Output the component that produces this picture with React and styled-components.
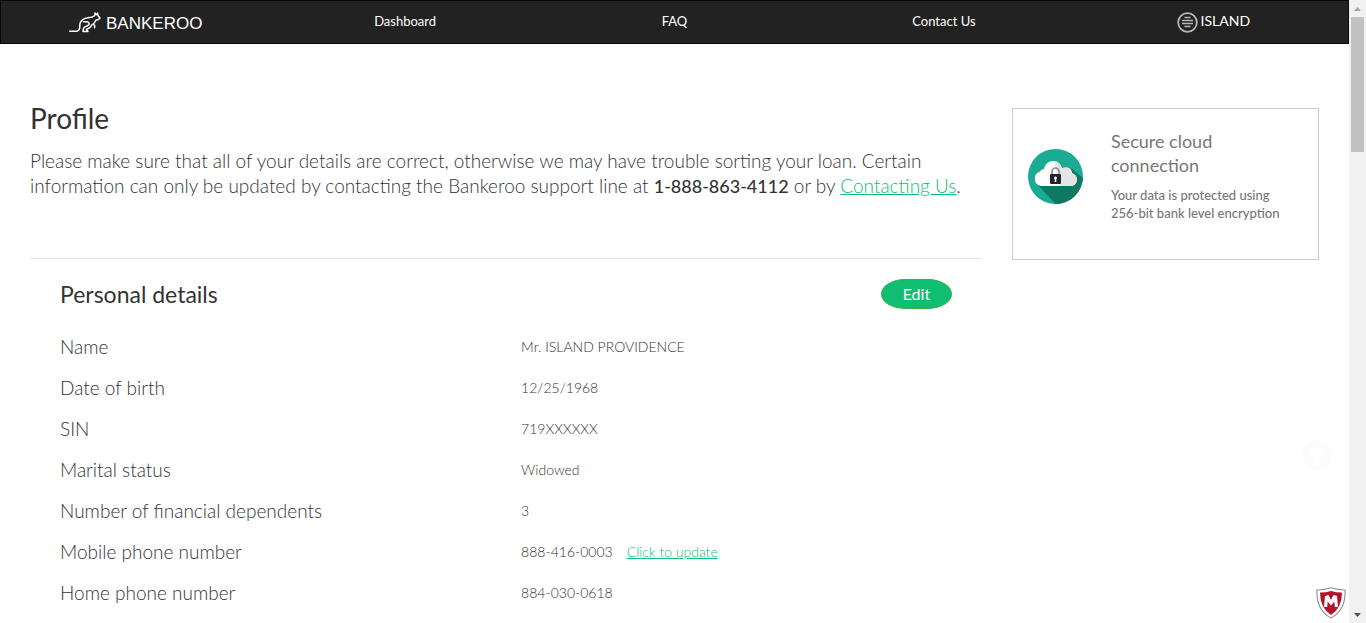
import React from "react";
import styled, { createGlobalStyle } from "styled-components";

const GlobalStyle = createGlobalStyle`
  * { box-sizing: border-box; }
  body { margin: 0; background: #fff; color: #333; font-family: Lato, "Open Sans", sans-serif; }
`;

const Window = styled.div`
  display: flex;
  height: 100vh;
  overflow: hidden;
`;

const Page = styled.div`
  flex: 1;
  min-width: 0;
  overflow: hidden;
`;

const Navbar = styled.nav`
  display: grid;
  grid-template-columns: repeat(5, 1fr);
  height: 44px;
  background: #222;
  border: 1px solid #080808;
`;

const NavLink = styled.a`
  display: flex;
  align-items: center;
  justify-content: center;
  gap: 3px;
  padding-bottom: 3px;
  color: #fff;
  font-size: ${(p) => (p.$large ? "14px" : "13px")};
  line-height: 20px;
  text-decoration: none;

  svg { margin-top: 3px; }
`;

const Brand = styled(NavLink)`
  gap: 5px;
  padding-bottom: 0;
  font-family: "Liberation Sans", Arial, sans-serif;
  font-size: 17px;
  line-height: 24px;

  span { padding-top: 3px; }
  svg { margin-top: 0; }
`;

const Main = styled.main`
  display: grid;
  grid-template-columns: 31fr 10fr;
  align-items: start;
  gap: 30px;
  padding: 56px 30px 0;
`;

const Intro = styled.header`
  height: 159px;
  border-bottom: 1px solid #e3e3e3;
`;

const Title = styled.h1`
  margin: 0;
  font-size: 28px;
  font-weight: 400;
  line-height: 36px;
`;

const Lead = styled.p`
  margin: 12px 0 0;
  font-size: 19px;
  font-weight: 300;
  line-height: 25px;
`;

const Strong = styled.strong`
  font-size: 18px;
  font-weight: 500;
`;

const GreenLink = styled.a`
  color: #10be72;
  text-decoration: underline;
`;

const Section = styled.section`
  padding: 20px 30px 0;
`;

const SectionHead = styled.div`
  display: flex;
  align-items: center;
  justify-content: space-between;
  height: 30px;
`;

const SectionTitle = styled.h2`
  margin: 0;
  font-size: 23px;
  font-weight: 400;
  line-height: 30px;
`;

const EditButton = styled.button`
  width: 71px;
  height: 30px;
  padding: 0;
  border: 1px solid #3fae49;
  border-radius: 24px / 15px;
  background: #10be72;
  color: #fff;
  font: 400 16px/28px Lato, sans-serif;
`;

const Details = styled.table`
  width: 100%;
  margin-top: 17px;
  border-collapse: collapse;
  table-layout: fixed;
`;

const Label = styled.th`
  width: 51.7%;
  height: 41px;
  padding: 0 0 1px;
  text-align: left;
  font-size: 19px;
  font-weight: 300;
`;

const Value = styled.td`
  padding: 0;
  color: #333;
  font-size: 14px;
  font-weight: 300;

  a { margin-left: 14px; }
`;

const Card = styled.aside`
  display: flex;
  gap: 28px;
  min-height: 152px;
  margin-top: 8px;
  padding: 20px 20px 20px 15px;
  border: 1px solid #ccc;
  color: #777;

  svg { flex: none; margin-top: 20px; }
`;

const CardTitle = styled.h3`
  margin: 0 0 9px;
  font-size: 18px;
  font-weight: 400;
  line-height: 24px;
`;

const CardText = styled.p`
  margin: 0;
  font-size: 13px;
  font-weight: 500;
  line-height: 18px;
`;

const Scrollbar = styled.div`
  display: flex;
  flex-direction: column;
  align-items: center;
  width: 17px;
  background: #f1f1f1;
`;

const Thumb = styled.div`
  width: 13px;
  height: 135px;
  margin-bottom: auto;
  background: #c1c1c1;
`;

const TopLink = styled.a`
  position: fixed;
  right: 34px;
  bottom: 153px;
  display: flex;
`;

const Shield = styled.div`
  position: fixed;
  right: 20px;
  bottom: 4px;
  display: flex;
`;

const rows = [
  ["Name", "Mr. ISLAND PROVIDENCE"],
  ["Date of birth", "12/25/1968"],
  ["SIN", "719XXXXXX"],
  ["Marital status", "Widowed"],
  ["Number of financial dependents", "3"],
  ["Mobile phone number", "888-416-0003", "Click to update"],
  ["Home phone number", "884-030-0618"],
];

const Kangaroo = () => (
  <svg width="32" height="21" viewBox="0 0 32 21" fill="none" stroke="#fff" strokeWidth="1.5" strokeLinecap="round" strokeLinejoin="round">
    <path d="M.8 19.300H7.500Q10.300 19 10.800 15.500Q10.300 10 13.500 7.800Q16 6 19 5.800Q23.500 5.500 25.800 3.500L26 .9L27.500 2.600L28.600 1.200L29 3.500L31 6L29.300 7.600L26.800 8.200Q26 10.500 24 12L25.600 13.300V15.800" />
    <path d="M14.500 9.800H18Q20.500 10.200 20 12.500Q18.800 14 16 14.800Q13.800 16.200 14 19.500H19L17.500 17.300L21 15.500L23 12.800" />
  </svg>
);

const MenuIcon = () => (
  <svg width="21" height="21" viewBox="0 0 21 21" fill="none" stroke="#b8b8b8">
    <circle cx="10.500" cy="10.500" r="9.300" strokeWidth="1.800" />
    <path d="M7.500 5.500H13.500M5 8.500H16M5 11.500H16M7.500 14.500H13.500" strokeWidth="1.700" />
  </svg>
);

const CloudIcon = () => (
  <svg width="55" height="55" viewBox="0 0 55 55">
    <circle cx="27.500" cy="27.500" r="27.500" fill="#1aab94" />
    <path d="M9 35L27.500 55A27.500 27.500 0 0 0 54.900 29L43 19L35 34Z" fill="#0e7863" />
    <path d="M13 37A7.500 7.500 0 0 1 12 22.500Q13 20 16 20Q18 12 25 12Q31 12 34 19Q43 17 44 24Q49 26 49 31Q48 37 42 37Z" fill="#fff" />
    <path d="M27 12Q32 13 34 19Q43 17 44 24Q49 26 49 31Q48 37 42 37H32V25L27 20Z" fill="#e4e5e5" />
    <path d="M24 26V22.500a3.500 3.500 0 0 1 7 0V26" fill="none" stroke="#8f9090" strokeWidth="1.700" />
    <rect x="22" y="25" width="11" height="10" rx="1" fill="#23242b" />
    <path d="M27.500 27.500a1.500 1.500 0 0 1 .8 2.700V33h-1.600v-2.800a1.500 1.500 0 0 1 .8-2.700Z" fill="#fff" />
  </svg>
);

const Arrow = ({ down }) => (
  <svg width="17" height="17" viewBox="0 0 17 17">
    {down ? <path d="M5 7H12L8.500 11Z" fill="#505050" /> : <path d="M5 11H12L8.500 7Z" fill="#a3a3a3" />}
  </svg>
);

export default function App() {
  return (
    <Window>
      <GlobalStyle />
      <Page>
        <Navbar>
          <Brand href="#"><Kangaroo /><span>BANKEROO</span></Brand>
          <NavLink href="#">Dashboard</NavLink>
          <NavLink href="#">FAQ</NavLink>
          <NavLink href="#">Contact Us</NavLink>
          <NavLink href="#" $large><MenuIcon />ISLAND</NavLink>
        </Navbar>
        <Main>
          <div>
            <Intro>
              <Title>Profile</Title>
              <Lead>
                Please make sure that all of your details are correct, otherwise we may have trouble sorting your loan. Certain information can only be updated by contacting the Bankeroo support line at <Strong>1-888-863-4112</Strong> or by <GreenLink href="#">Contacting Us</GreenLink>.
              </Lead>
            </Intro>
            <Section>
              <SectionHead>
                <SectionTitle>Personal details</SectionTitle>
                <EditButton type="button">Edit</EditButton>
              </SectionHead>
              <Details>
                <tbody>
                  {rows.map(([label, value, link]) => (
                    <tr key={label}>
                      <Label scope="row">{label}</Label>
                      <Value>{value}{link && <GreenLink href="#">{link}</GreenLink>}</Value>
                    </tr>
                  ))}
                </tbody>
              </Details>
            </Section>
          </div>
          <Card>
            <CloudIcon />
            <div>
              <CardTitle>Secure cloud connection</CardTitle>
              <CardText>Your data is protected using 256-bit bank level encryption</CardText>
            </div>
          </Card>
        </Main>
      </Page>
      <Scrollbar aria-hidden="true">
        <Arrow />
        <Thumb />
        <Arrow down />
      </Scrollbar>
      <TopLink href="#" aria-label="Back to top">
        <svg width="30" height="30" viewBox="0 0 30 30">
          <circle cx="15" cy="15" r="15" fill="#fcfcfc" />
          <path d="M15 5L23 14L20 16L17.500 13.500V25H12.500V13.500L10 16L7 14Z" fill="#fff" />
        </svg>
      </TopLink>
      <Shield>
        <svg width="30" height="32" viewBox="0 0 30 32">
          <path d="M1 3Q9 3 15 .8Q21 3 29 3Q30 23 15 31Q0 23 1 3Z" fill="#fff" stroke="#8b989d" strokeWidth="1.200" />
          <path d="M4 5.500Q10 5.500 15 4Q20 5.500 26 5.500Q26 21 15 28Q4 21 4 5.500Z" fill="#b5132c" />
          <path d="M8 20L9 9L12.500 8L15 13L17.500 8L21 9L22 20H18.800L18.300 14.500L15 18.500L11.700 14.500L11.200 20Z" fill="#fff" />
        </svg>
      </Shield>
    </Window>
  );
}
